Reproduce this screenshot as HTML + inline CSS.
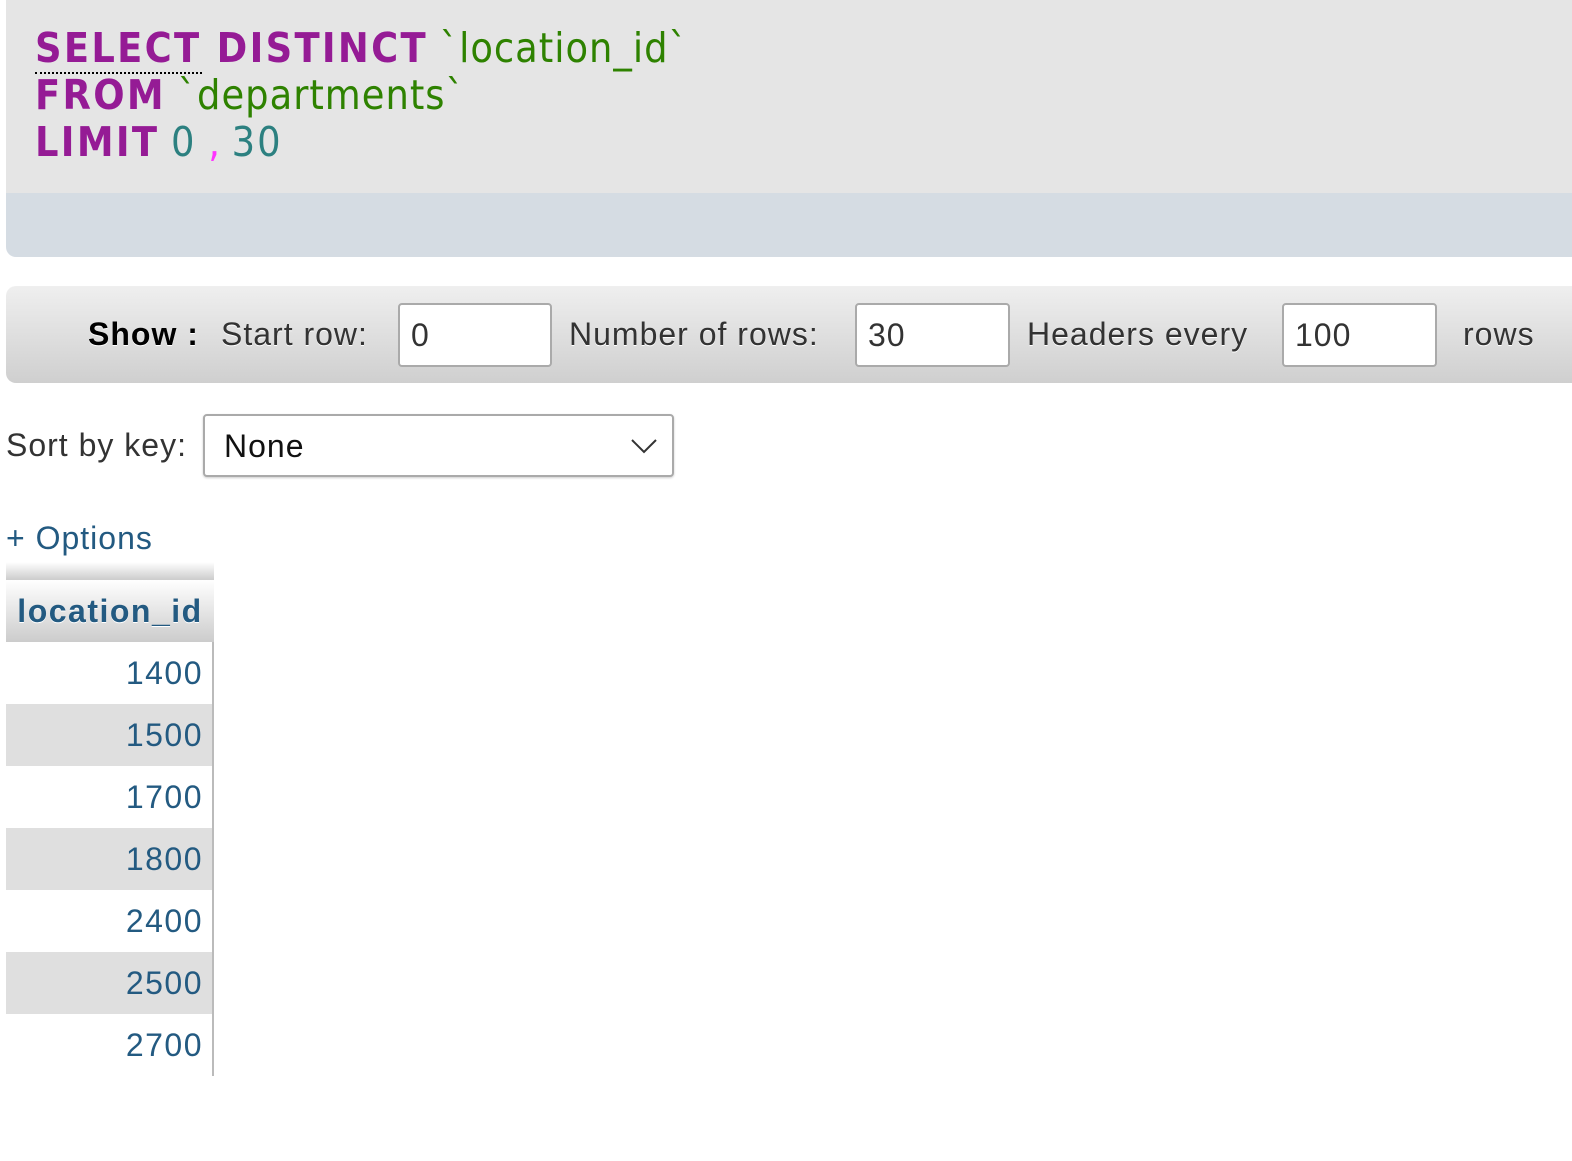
<!DOCTYPE html>
<html><head><meta charset="utf-8"><style>
body{margin:0;width:1572px;height:1161px;background:#fff;position:relative;overflow:hidden;font-family:"Liberation Sans",sans-serif;}
.a{position:absolute;}
.sql{left:6px;top:0;width:1566px;height:193px;background:#e5e5e5;}
.strip{left:6px;top:193px;width:1566px;height:64px;background:#d5dce3;border-bottom-left-radius:10px;}
.code{left:35px;top:25px;font-family:"DejaVu Sans Condensed","DejaVu Sans",sans-serif;font-stretch:condensed;font-size:41px;line-height:47px;white-space:pre;}
.k{color:#951b95;font-weight:bold;letter-spacing:2.3px;}
.s{color:#2e8200;letter-spacing:1px;}
.n{color:#2c8080;letter-spacing:2px;}
.p{color:#ff33ff;}
.show{left:6px;top:286px;width:1566px;height:97px;border-radius:10px 0 0 10px;background:linear-gradient(#efefef,#cfcfcf);}
.t{font-size:32px;color:#333;text-shadow:0 1px 0 #fff;line-height:36px;letter-spacing:1px;}
.in{height:64px;border:2px solid #aaa;border-radius:4px;background:#fff;box-sizing:border-box;font-size:32px;color:#333;padding-left:11px;line-height:60px;letter-spacing:1px;}
.row{left:6px;width:208px;height:62px;text-align:right;font-size:32px;color:#235a81;line-height:62px;box-sizing:border-box;padding-right:9px;border-right:2px solid #bbb;letter-spacing:1.5px;}
</style></head><body>
<div class="a sql"></div>
<div class="a strip"></div>
<div class="a code"><span class="k" style="border-bottom:2px dotted #000">SELECT</span><span class="k"> DISTINCT</span> <span class="s">`location_id`</span>
<span class="k">FROM</span> <span class="s">`departments`</span>
<span class="k">LIMIT</span> <span class="n">0</span> <span class="p">,</span> <span class="n">30</span></div>
<div class="a show"></div>
<div class="a t" style="left:88px;top:316px;font-weight:bold;color:#000">Show :</div>
<div class="a t" style="left:221px;top:316px">Start row:</div>
<div class="a in" style="left:398px;top:303px;width:154px">0</div>
<div class="a t" style="left:569px;top:316px">Number of rows:</div>
<div class="a in" style="left:855px;top:303px;width:155px">30</div>
<div class="a t" style="left:1027px;top:316px">Headers every</div>
<div class="a in" style="left:1282px;top:303px;width:155px">100</div>
<div class="a t" style="left:1463px;top:316px">rows</div>
<div class="a t" style="left:6px;top:427px;text-shadow:none">Sort by key:</div>
<div class="a in" style="left:203px;top:414px;width:471px;height:63px;padding-left:19px;color:#111;box-shadow:0 1px 2px #ccc">None
<svg style="position:absolute;right:14px;top:22px" width="28" height="16" viewBox="0 0 28 16"><path d="M2 2 L14 14 L26 2" fill="none" stroke="#333" stroke-width="2"/></svg></div>
<div class="a" style="left:6px;top:520px;font-size:32px;color:#235a81;line-height:36px;letter-spacing:1px">+ Options</div>
<div class="a" style="left:6px;top:562px;width:208px;height:18px;background:linear-gradient(#fff,#ccc)"></div>
<div class="a" style="left:6px;top:580px;width:208px;height:62px;background:linear-gradient(#fff,#ccc);font-size:32px;font-weight:bold;color:#235a81;line-height:62px;text-align:center;text-shadow:0 1px 0 #fff;letter-spacing:1.5px">location_id</div>
<div class="a row" style="top:642px;background:#fff">1400</div>
<div class="a row" style="top:704px;background:#dfdfdf">1500</div>
<div class="a row" style="top:766px;background:#fff">1700</div>
<div class="a row" style="top:828px;background:#dfdfdf">1800</div>
<div class="a row" style="top:890px;background:#fff">2400</div>
<div class="a row" style="top:952px;background:#dfdfdf">2500</div>
<div class="a row" style="top:1014px;background:#fff">2700</div>
</body></html>
